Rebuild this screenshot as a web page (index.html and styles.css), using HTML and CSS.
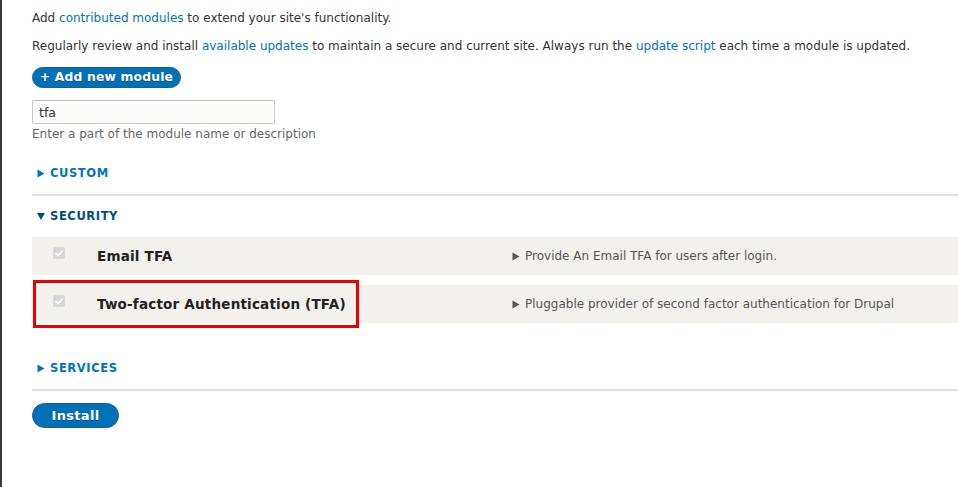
FILE: index.html
```html
<!DOCTYPE html>
<html>
<head>
<meta charset="utf-8">
<link rel="stylesheet" href="styles.css">
</head>
<body>
<div class="page">
  <p class="intro">Add <a href="#">contributed modules</a> to extend your site's functionality.</p>
  <p class="intro">Regularly review and install <a href="#">available updates</a> to maintain a secure and current site. Always run the <a href="#">update script</a> each time a module is updated.</p>
  <div class="actions"><a class="btn btn-add" href="#">+ Add new module</a></div>
  <div class="filter">
    <input class="filter-input" type="text" value="tfa">
    <div class="filter-desc">Enter a part of the module name or description</div>
  </div>
  <div class="group">
    <div class="group-title"><svg class="tri" viewBox="0 0 8 9" width="8" height="9"><path d="M0.5 0.5 L7.5 4.5 L0.5 8.5 Z" fill="currentColor"/></svg>CUSTOM</div>
  </div>
  <div class="group open">
    <div class="group-title"><svg class="tri" viewBox="0 0 8 9" width="8" height="9"><path d="M0 1 L8 1 L4 8 Z" fill="currentColor"/></svg>SECURITY</div>
    <div class="rows">
      <div class="row">
        <div class="cb"><span class="box"><svg viewBox="0 0 12 12" width="12" height="12"><path d="M2.5 6.2 L5 8.6 L9.6 3.6" fill="none" stroke="#fff" stroke-width="1.6"/></svg></span></div>
        <div class="name">Email TFA</div>
        <div class="desc"><svg class="dtri" viewBox="0 0 8 9" width="8" height="9"><path d="M0.5 0.5 L7.5 4.5 L0.5 8.5 Z" fill="currentColor"/></svg>Provide An Email TFA for users after login.</div>
      </div>
      <div class="row">
        <div class="cb"><span class="box"><svg viewBox="0 0 12 12" width="12" height="12"><path d="M2.5 6.2 L5 8.6 L9.6 3.6" fill="none" stroke="#fff" stroke-width="1.6"/></svg></span></div>
        <div class="name">Two-factor Authentication (TFA)</div>
        <div class="desc"><svg class="dtri" viewBox="0 0 8 9" width="8" height="9"><path d="M0.5 0.5 L7.5 4.5 L0.5 8.5 Z" fill="currentColor"/></svg>Pluggable provider of second factor authentication for Drupal</div>
        <div class="highlight"></div>
      </div>
    </div>
  </div>
  <div class="group last">
    <div class="group-title"><svg class="tri" viewBox="0 0 8 9" width="8" height="9"><path d="M0.5 0.5 L7.5 4.5 L0.5 8.5 Z" fill="currentColor"/></svg>SERVICES</div>
  </div>
  <div class="actions install"><a class="btn btn-install" href="#">Install</a></div>
</div>
</body>
</html>
```
FILE: styles.css
```css
html, body {
  margin: 0;
  padding: 0;
  background: #fff;
}
body {
  font-family: "DejaVu Sans", sans-serif;
  font-size: 12px;
  color: #333;
  border-left: 2px solid #3b3b3b;
  min-height: 487px;
  box-sizing: border-box;
}
.page {
  padding: 11px 0 0 30px;
}
a {
  color: #0074bd;
  text-decoration: none;
}
.intro {
  margin: 0 0 13px;
  line-height: 15px;
}
.actions {
  margin-top: 8px;
}
.btn {
  display: inline-block;
  background: #0071b8;
  border: 1px solid #1e5c90;
  color: #fff;
  font-weight: bold;
  border-radius: 20px;
  text-shadow: 0 1px 0 #1a4e7a;
  box-sizing: border-box;
}
.btn-add {
  height: 21px;
  line-height: 19px;
  width: 149px;
  text-align: center;
  font-size: 12.3px;
  letter-spacing: 0.2px;
}
.filter {
  margin-top: 12px;
}
.filter-input {
  display: block;
  width: 243px;
  height: 24px;
  box-sizing: border-box;
  border: 1px solid #c8c8c8;
  border-top-color: #b8b8b8;
  border-radius: 2px;
  background: #fcfcfa;
  font-family: "DejaVu Sans", sans-serif;
  font-size: 12.5px;
  color: #333;
  padding: 0 6px;
  margin: 0;
}
.filter-desc {
  color: #666;
  margin-top: 3px;
  line-height: 15px;
}
.group {
  border-bottom: 2px solid #e0e0e0;
  margin-top: 9px;
}
.group.open {
  border-bottom: 0;
  margin-top: 0;
}
.group.last {
  margin-top: 0;
}
.group-title {
  font-weight: bold;
  color: #0074bd;
  letter-spacing: 0.6px;
  font-size: 11.5px;
  line-height: 16px;
  padding: 14px 0 13px 5px;
  display: flex;
  align-items: center;
}
.group.open .group-title {
  color: #004f80;
  padding: 12px 0 13px 5px;
}
.tri {
  display: block;
  width: 8px;
  height: 9px;
  margin-right: 5px;
}
.rows {
  display: flex;
  flex-direction: column;
  gap: 10px;
  padding-bottom: 23px;
}
.row {
  position: relative;
  display: flex;
  align-items: center;
  height: 38px;
  background: #f2f1eb;
}
.cb {
  width: 65px;
  align-self: flex-start;
  padding-top: 10px;
  padding-left: 21px;
  box-sizing: border-box;
}
.box {
  display: block;
  width: 12px;
  height: 12px;
  background: #d6d6d6;
  border-radius: 2px;
}
.box svg {
  display: block;
}
.name {
  width: 415px;
  font-weight: bold;
  font-size: 13.5px;
  color: #222;
  letter-spacing: 0.2px;
}
.desc {
  color: #555;
  font-size: 12px;
  display: flex;
  align-items: center;
}
.dtri {
  display: block;
  width: 8px;
  height: 9px;
  margin-right: 5px;
  color: #555;
}
.highlight {
  position: absolute;
  left: 1px;
  top: -5px;
  width: 326px;
  height: 48px;
  border: 3px solid #ee0000;
  box-sizing: border-box;
}
.install {
  margin-top: 12px;
}
.btn-install {
  height: 25px;
  line-height: 23px;
  width: 87px;
  text-align: center;
  font-size: 13px;
  letter-spacing: 0.3px;
}
```
